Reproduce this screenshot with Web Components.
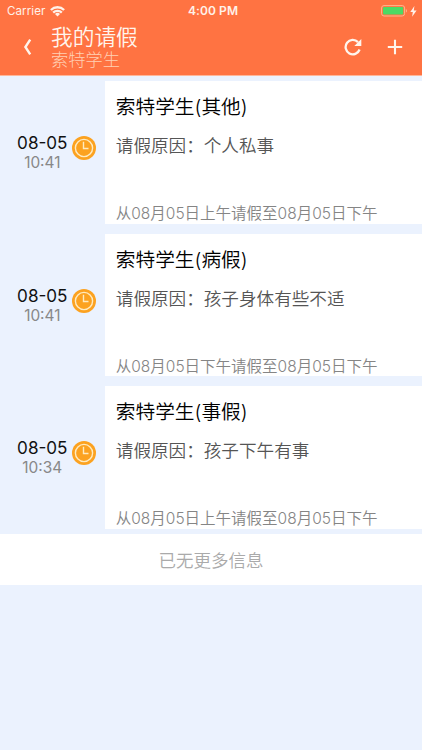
<!DOCTYPE html>
<html lang="zh-CN">
<head>
<meta charset="utf-8">
<meta name="viewport" content="width=device-width, initial-scale=1">
<title>我的请假</title>
<style>
    body {
        margin: 0;
        min-height: 100vh;
        background: #ebf2fe;
        font-family: Inter, "Noto Sans CJK SC", sans-serif;
    }
</style>
</head>
<body>
<leave-page></leave-page>

<script>
class StatusBar extends HTMLElement {
    constructor() {
        super();
        this.attachShadow({ mode: "open" });
        this.shadowRoot.innerHTML = `
        <style>
          :host {
            display: grid;
            grid-template-columns: 1fr auto 1fr;
            align-items: center;
            height: 22px;
            padding: 0 5px 0 7px;
            box-sizing: border-box;
            color: #fff1e9;
            font-size: 11.6px;
            line-height: 22px;
          }
          .left, .right {
            display: flex;
            align-items: center;
          }
          .left { gap: 5px; letter-spacing: 0.05px; }
          .right { justify-content: flex-end; gap: 2px; }
          .time { font-weight: 600; font-size: 12px; letter-spacing: 0.1px; padding-left: 2px; }
          svg { display: block; }
        </style>
        <div class="left">
          <span>Carrier</span>
          <svg width="15" height="11" viewBox="0 0 15 11" fill="none" stroke="currentColor" stroke-width="2.3">
            <path d="M.9 4a9.3 9.3 0 0 1 13.2 0M3.2 6.6a6.1 6.1 0 0 1 8.6 0"/>
            <path d="M7.5 10.6L5 8.1a3.5 3.5 0 0 1 5 0z" fill="currentColor" stroke="none"/>
          </svg>
        </div>
        <span class="time">4:00 PM</span>
        <div class="right">
          <svg width="27" height="12" viewBox="0 0 27 12">
            <rect x=".6" y=".6" width="23" height="10.4" rx="2.4" fill="none" stroke="#ffb58e" stroke-width="1"/>
            <rect x="2" y="2" width="20.2" height="7.6" rx="1.1" fill="#4cd964"/>
            <path d="M24.9 4v3.6c1.4-.5 1.4-3.1 0-3.6z" fill="#ffb58e"/>
          </svg>
          <svg width="7" height="11" viewBox="0 0 7 11"><path d="M4.4 0L.3 6.1h2.5L2.1 10.8 6.6 4.5H3.8z" fill="currentColor"/></svg>
        </div>
      `;
    }
}

class NavHeader extends HTMLElement {
    constructor() {
        super();
        this.attachShadow({ mode: "open" });
        this.shadowRoot.innerHTML = `
        <style>
          :host {
            display: flex;
            align-items: center;
            height: 50px;
            padding: 0 19px 0 23px;
            box-sizing: border-box;
            color: #fff5ed;
          }
          .titles { flex: 1; padding-left: 19px; }
          .title { font-size: 21.7px; line-height: 25px; }
          .subtitle { font-size: 17.3px; line-height: 19px; color: #ffd0b4; }
          .title { font-weight: 350; }
          .subtitle { font-weight: 300; }
          .actions { display: flex; align-items: center; gap: 25px; }
          svg { display: block; }
        </style>
        <svg width="9" height="16" viewBox="0 0 9 16" fill="none" stroke="currentColor" stroke-width="2.4">
          <path d="M7.2 .7L2.4 8l4.8 7.3"/>
        </svg>
        <div class="titles">
          <div class="title"><slot name="title"></slot></div>
          <div class="subtitle"><slot name="subtitle"></slot></div>
        </div>
        <div class="actions">
          <svg width="18" height="18" viewBox="0 0 18 18">
            <path d="M15.6 11.5A7.2 7.2 0 1 1 14 4.1" fill="none" stroke="currentColor" stroke-width="2.3"/>
            <path d="M17.3 .9v7h-7z" fill="currentColor"/>
          </svg>
          <svg width="16" height="16" viewBox="0 0 16 16" stroke="currentColor" stroke-width="2.1">
            <path d="M8 .8v14.4M.8 8h14.4"/>
          </svg>
        </div>
      `;
    }
}

class ClockBadge extends HTMLElement {
    constructor() {
        super();
        this.attachShadow({ mode: "open" });
        this.shadowRoot.innerHTML = `
        <style>
          :host { display: block; width: 24px; height: 24px; }
          svg { display: block; }
        </style>
        <svg width="24" height="24" viewBox="0 0 24 24" fill="none" stroke="#ffebc0" stroke-width="1.4">
          <circle cx="12" cy="12" r="12" fill="#fca220" stroke="none"/>
          <circle cx="12" cy="12" r="8.6"/>
          <path d="M11.5 5.8v6.7h5"/>
        </svg>
      `;
    }
}

class LeaveItem extends HTMLElement {
    constructor() {
        super();
        this.attachShadow({ mode: "open" });
        this.shadowRoot.innerHTML = `
        <style>
          :host {
            display: flex;
            height: 152.7px;
            padding: 5px 0;
            box-sizing: border-box;
          }
          .when {
            display: flex;
            flex: none;
            align-items: center;
            justify-content: flex-end;
            gap: 4.5px;
            width: 105.3px;
            padding: 0 9.3px 9px 0;
            box-sizing: border-box;
          }
          .stamp { text-align: center; padding-top: 10.4px; white-space: nowrap; }
          .date { font-size: 17.1px; line-height: 20px; color: #111; }
          .time { font-size: 15.4px; line-height: 20px; color: #888; }
          .card {
            display: flex;
            flex: 1;
            flex-direction: column;
            background: #fff;
            padding: 11px 10.5px 0;
            white-space: nowrap;
          }
          .name { font-size: 19.7px; line-height: 30px; color: #000; }
          .reason { font-size: 17.6px; line-height: 26px; padding-top: 11px; color: #555; }
          .period { font-size: 15.5px; line-height: 22px; margin: auto 0 -1.4px; color: #858585; }
          .name, .reason, .period { font-weight: 350; }
        </style>
        <div class="when">
          <div class="stamp">
            <div class="date"></div>
            <div class="time"></div>
          </div>
          <clock-badge></clock-badge>
        </div>
        <div class="card">
          <div class="name"><slot></slot></div>
          <div class="reason"></div>
          <div class="period"></div>
        </div>
      `;
    }

    connectedCallback() {
        for (const key of ["date", "time", "reason", "period"]) {
            this.shadowRoot.querySelector("." + key).textContent =
                this.getAttribute(key) || "";
        }
    }
}

class ListEnd extends HTMLElement {
    constructor() {
        super();
        this.attachShadow({ mode: "open" });
        this.shadowRoot.innerHTML = `
        <style>
          :host {
            display: block;
            height: 50.5px;
            line-height: 53px;
            background: #fff;
            color: #aaa;
            font-size: 17.5px;
            font-weight: 350;
            text-align: center;
          }
        </style>
        <slot></slot>
      `;
    }
}

class LeavePage extends HTMLElement {
    constructor() {
        super();
        this.attachShadow({ mode: "open" });
        this.shadowRoot.innerHTML = `
        <style>
          :host { display: block; }
          header { height: 76px; background: linear-gradient(#ff7342 75px, #ffb698 75px); }
        </style>
        <header>
          <status-bar></status-bar>
          <nav-header>
            <span slot="title">我的请假</span>
            <span slot="subtitle">索特学生</span>
          </nav-header>
        </header>
        <main>
          <leave-item date="08-05" time="10:41" reason="请假原因：个人私事" period="从08月05日上午请假至08月05日下午">索特学生(其他)</leave-item>
          <leave-item date="08-05" time="10:41" reason="请假原因：孩子身体有些不适" period="从08月05日下午请假至08月05日下午">索特学生(病假)</leave-item>
          <leave-item date="08-05" time="10:34" reason="请假原因：孩子下午有事" period="从08月05日上午请假至08月05日下午">索特学生(事假)</leave-item>
          <list-end>已无更多信息</list-end>
        </main>
      `;
    }
}

customElements.define("status-bar", StatusBar);
customElements.define("nav-header", NavHeader);
customElements.define("clock-badge", ClockBadge);
customElements.define("leave-item", LeaveItem);
customElements.define("list-end", ListEnd);
customElements.define("leave-page", LeavePage);
</script>
</body>
</html>
